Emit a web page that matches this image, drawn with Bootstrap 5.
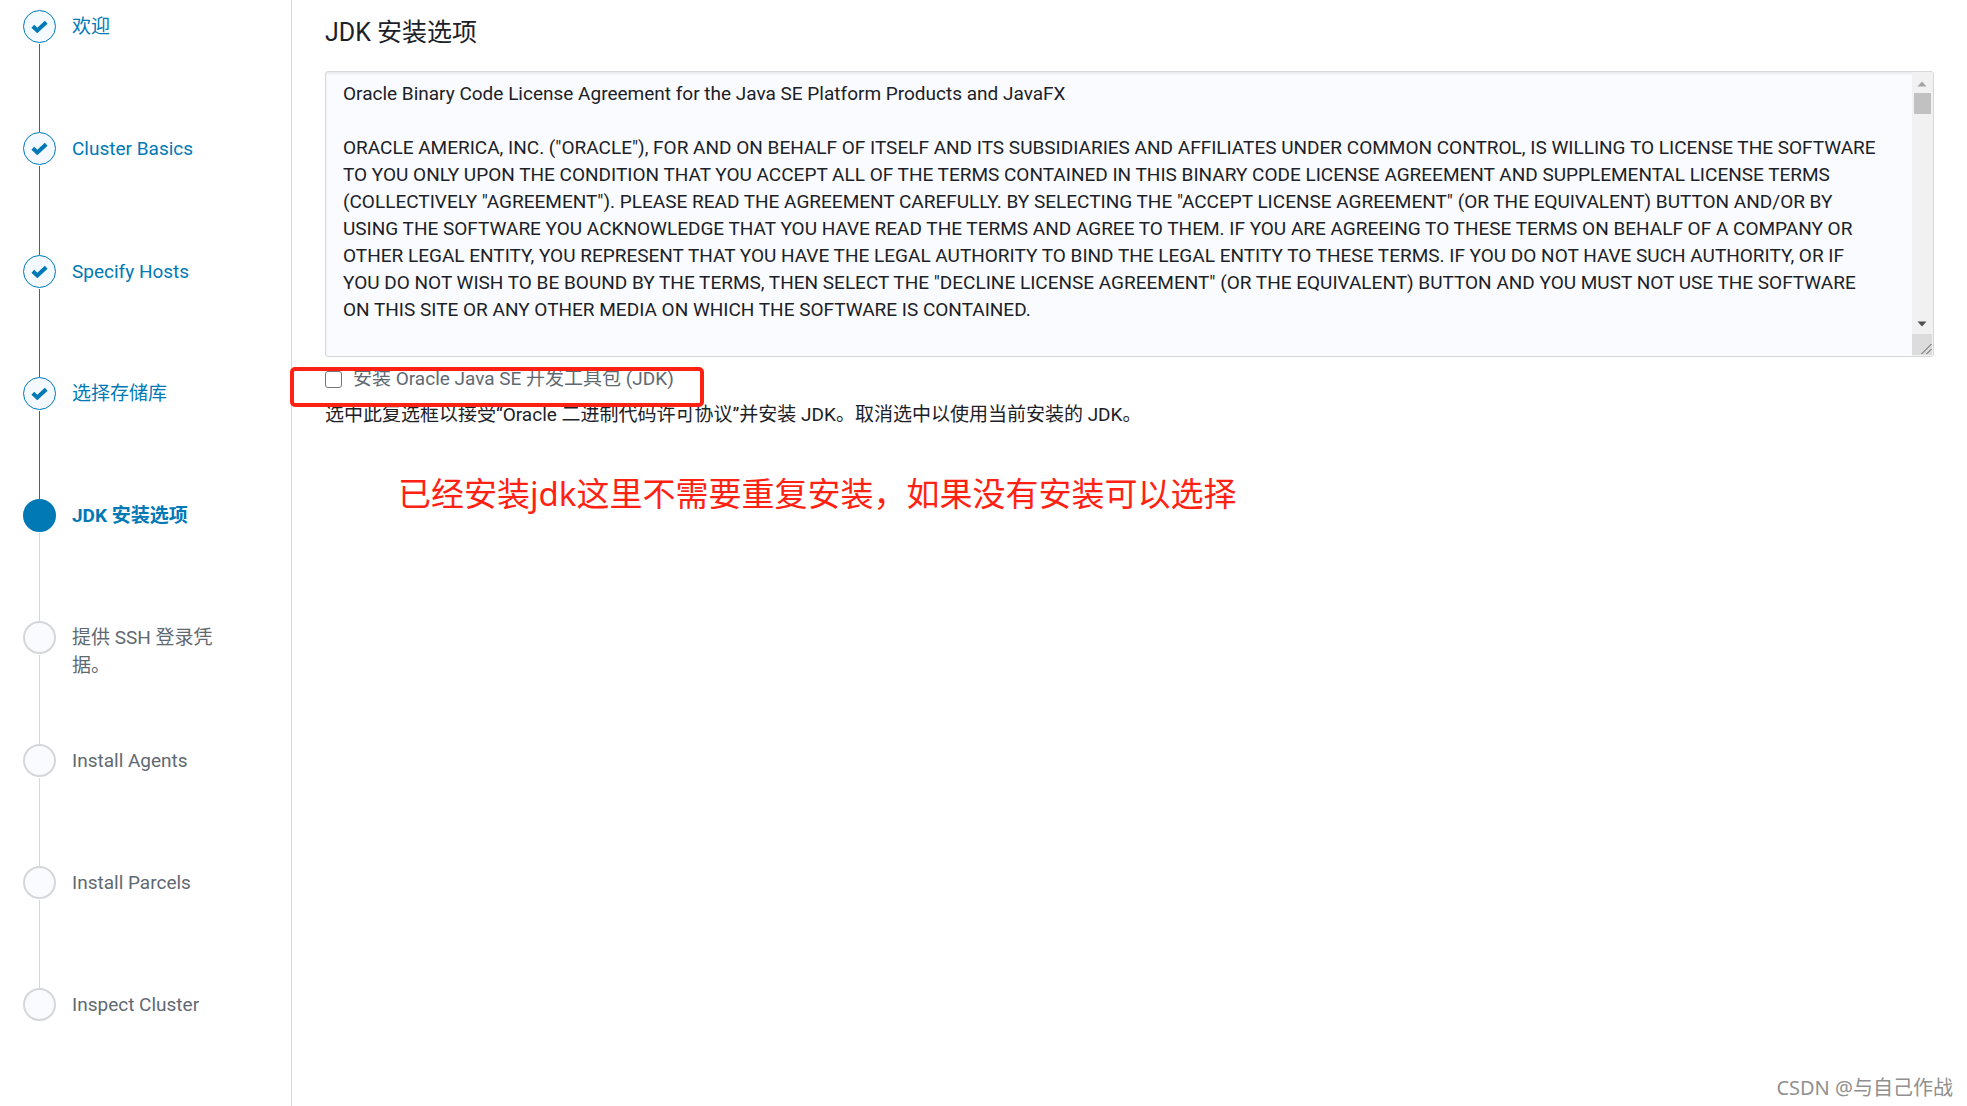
<!DOCTYPE html>
<html lang="zh-CN">
<head>
<meta charset="utf-8">
<meta name="viewport" content="width=device-width, initial-scale=1">
<title>JDK 安装选项</title>
<link href="https://cdn.jsdelivr.net/npm/bootstrap@5.3.0/dist/css/bootstrap.min.css" rel="stylesheet">
<style>
  :root { --wz-blue: #0079b5; --wz-line: #d5d7da; --wz-gray: #5f6972; --wz-ink: #1b2127; --wz-red: #ff2213; }
  body { font-family: Roboto, "Noto Sans CJK SC", sans-serif; font-size: 19px; line-height: 28px; color: var(--wz-ink); background: #fff; }
  .wizard-nav { flex: 0 0 292px; border-right: 1px solid var(--wz-line); padding: 10px 64px 10px 23px; }
  .wizard-steps { height: 1011px; }
  .wizard-step { flex: 1 1 0; gap: 16px; color: var(--wz-gray); }
  .wizard-step:last-child { flex: 0 0 33px; }
  .step-rail { flex: 0 0 33px; }
  .step-dot { flex: 0 0 33px; width: 33px; border: 2px solid var(--wz-line); background: #f9fbfe; }
  .step-line { width: 1px; background: var(--wz-line); margin-top: 1px; }
  .step-text { color: inherit; padding-top: 3px; }
  .is-done, .is-current { color: var(--wz-blue); }
  .is-done .step-dot { border: 1px solid var(--wz-blue); background: #f3f9fe; }
  .is-done .step-line { background: var(--wz-blue); }
  .is-current .step-dot { border-color: var(--wz-blue); background: var(--wz-blue); }
  .is-current .step-text { font-weight: 700; }
  .wizard-main { padding: 17px 33px 16px 33px; }
  .wizard-title { font-size: 25px; line-height: 32px; margin-bottom: 22px; font-weight: 400; }
  .license-box { height: 286px; border: 1px solid var(--wz-line); border-radius: 3px; background: #f9fbfe; box-shadow: inset 0 2px 2px #e9ebee; }
  .license-text { border: 0; outline: 0; resize: none; overflow: hidden; background: transparent; color: inherit; padding: 8px 0 0 17px; white-space: pre; line-height: 27px; }
  .scroll-rail { flex: 0 0 21px; background: #f1f1f1; }
  .scroll-thumb { height: 21px; margin: 0 2px; background: #c1c1c1; }
  .scroll-rail svg { display: block; }
  .accept-row { margin-top: 8px; gap: 11px; color: var(--wz-gray); position: relative; }
  .accept-row input { appearance: none; width: 17px; height: 17px; border: 1px solid #767676; border-radius: 3px; background: #fff; margin: 0; }
  .mark-frame { left: -35px; top: 2px; width: 414px; height: 40px; border: 4px solid var(--wz-red); border-radius: 5px; pointer-events: none; }
  .accept-help { margin-top: 8px; margin-bottom: 40px; }
  .red-note { font-family: "Noto Sans", "Noto Sans CJK SC", sans-serif; font-size: 33px; line-height: 50px; color: var(--wz-red); padding-left: 73px; }
  .watermark { right: 14px; bottom: 4px; font-family: "Noto Sans", "Noto Sans CJK SC", sans-serif; font-size: 20px; color: #909090; }
</style>
</head>
<body>
<div class="d-flex min-vh-100">
  <nav class="wizard-nav" aria-label="向导步骤">
    <ol class="wizard-steps list-unstyled d-flex flex-column m-0">
      <li class="wizard-step is-done d-flex">
        <div class="step-rail d-flex flex-column align-items-center"><span class="step-dot rounded-circle d-flex align-items-center justify-content-center"><svg width="17" height="13" viewBox="0 0 17 13" aria-hidden="true"><path d="M1.8 6.2 6.3 10.5 15.2 2.2" fill="none" stroke="#0079b5" stroke-width="4"/></svg></span><span class="step-line flex-fill"></span></div>
        <a class="step-text text-decoration-none" href="#">欢迎</a>
      </li>
      <li class="wizard-step is-done d-flex">
        <div class="step-rail d-flex flex-column align-items-center"><span class="step-dot rounded-circle d-flex align-items-center justify-content-center"><svg width="17" height="13" viewBox="0 0 17 13" aria-hidden="true"><path d="M1.8 6.2 6.3 10.5 15.2 2.2" fill="none" stroke="#0079b5" stroke-width="4"/></svg></span><span class="step-line flex-fill"></span></div>
        <a class="step-text text-decoration-none" href="#">Cluster Basics</a>
      </li>
      <li class="wizard-step is-done d-flex">
        <div class="step-rail d-flex flex-column align-items-center"><span class="step-dot rounded-circle d-flex align-items-center justify-content-center"><svg width="17" height="13" viewBox="0 0 17 13" aria-hidden="true"><path d="M1.8 6.2 6.3 10.5 15.2 2.2" fill="none" stroke="#0079b5" stroke-width="4"/></svg></span><span class="step-line flex-fill"></span></div>
        <a class="step-text text-decoration-none" href="#">Specify Hosts</a>
      </li>
      <li class="wizard-step is-done d-flex">
        <div class="step-rail d-flex flex-column align-items-center"><span class="step-dot rounded-circle d-flex align-items-center justify-content-center"><svg width="17" height="13" viewBox="0 0 17 13" aria-hidden="true"><path d="M1.8 6.2 6.3 10.5 15.2 2.2" fill="none" stroke="#0079b5" stroke-width="4"/></svg></span><span class="step-line flex-fill"></span></div>
        <a class="step-text text-decoration-none" href="#">选择存储库</a>
      </li>
      <li class="wizard-step is-current d-flex" aria-current="step">
        <div class="step-rail d-flex flex-column align-items-center"><span class="step-dot rounded-circle"></span><span class="step-line flex-fill"></span></div>
        <span class="step-text">JDK 安装选项</span>
      </li>
      <li class="wizard-step d-flex">
        <div class="step-rail d-flex flex-column align-items-center"><span class="step-dot rounded-circle"></span><span class="step-line flex-fill"></span></div>
        <span class="step-text">提供 SSH 登录凭据。</span>
      </li>
      <li class="wizard-step d-flex">
        <div class="step-rail d-flex flex-column align-items-center"><span class="step-dot rounded-circle"></span><span class="step-line flex-fill"></span></div>
        <span class="step-text">Install Agents</span>
      </li>
      <li class="wizard-step d-flex">
        <div class="step-rail d-flex flex-column align-items-center"><span class="step-dot rounded-circle"></span><span class="step-line flex-fill"></span></div>
        <span class="step-text">Install Parcels</span>
      </li>
      <li class="wizard-step d-flex">
        <div class="step-rail d-flex flex-column align-items-center"><span class="step-dot rounded-circle"></span></div>
        <span class="step-text">Inspect Cluster</span>
      </li>
    </ol>
  </nav>
  <main class="wizard-main flex-fill">
    <h1 class="wizard-title">JDK 安装选项</h1>
    <div class="license-box d-flex overflow-hidden">
      <textarea class="license-text flex-fill" readonly aria-label="Oracle Binary Code License Agreement">Oracle Binary Code License Agreement for the Java SE Platform Products and JavaFX

ORACLE AMERICA, INC. ("ORACLE"), FOR AND ON BEHALF OF ITSELF AND ITS SUBSIDIARIES AND AFFILIATES UNDER COMMON CONTROL, IS WILLING TO LICENSE THE SOFTWARE
TO YOU ONLY UPON THE CONDITION THAT YOU ACCEPT ALL OF THE TERMS CONTAINED IN THIS BINARY CODE LICENSE AGREEMENT AND SUPPLEMENTAL LICENSE TERMS
(COLLECTIVELY "AGREEMENT"). PLEASE READ THE AGREEMENT CAREFULLY. BY SELECTING THE "ACCEPT LICENSE AGREEMENT" (OR THE EQUIVALENT) BUTTON AND/OR BY
USING THE SOFTWARE YOU ACKNOWLEDGE THAT YOU HAVE READ THE TERMS AND AGREE TO THEM. IF YOU ARE AGREEING TO THESE TERMS ON BEHALF OF A COMPANY OR
OTHER LEGAL ENTITY, YOU REPRESENT THAT YOU HAVE THE LEGAL AUTHORITY TO BIND THE LEGAL ENTITY TO THESE TERMS. IF YOU DO NOT HAVE SUCH AUTHORITY, OR IF
YOU DO NOT WISH TO BE BOUND BY THE TERMS, THEN SELECT THE "DECLINE LICENSE AGREEMENT" (OR THE EQUIVALENT) BUTTON AND YOU MUST NOT USE THE SOFTWARE
ON THIS SITE OR ANY OTHER MEDIA ON WHICH THE SOFTWARE IS CONTAINED.</textarea>
      <div class="scroll-rail d-flex flex-column" aria-hidden="true">
        <svg width="21" height="21" viewBox="0 0 21 21"><path d="M5.500 14.500 10 9.500l4.500 5z" fill="#a3a3a3"/></svg>
        <div class="scroll-thumb"></div>
        <svg class="mt-auto" width="21" height="21" viewBox="0 0 21 21"><path d="M5.500 8.500h9L10 13.500z" fill="#505050"/></svg>
        <svg width="21" height="22" viewBox="0 0 21 22"><path d="M0 0h20v21H0z" fill="#dcdcdc"/><path d="M9.500 20 19.500 10M14.500 20l5-5" stroke="#505050" fill="none"/></svg>
      </div>
    </div>
    <div class="accept-row d-flex align-items-center">
      <input type="checkbox" id="installJdk">
      <label for="installJdk">安装 Oracle Java SE 开发工具包 (JDK)</label>
      <div class="mark-frame position-absolute"></div>
    </div>
    <p class="accept-help">选中此复选框以接受“Oracle 二进制代码许可协议”并安装 JDK。取消选中以使用当前安装的 JDK。</p>
    <p class="red-note m-0">已经安装jdk这里不需要重复安装，如果没有安装可以选择</p>
  </main>
</div>
<div class="watermark position-absolute">CSDN @与自己作战</div>
<script src="https://cdn.jsdelivr.net/npm/bootstrap@5.3.0/dist/js/bootstrap.bundle.min.js"></script>
</body>
</html>
